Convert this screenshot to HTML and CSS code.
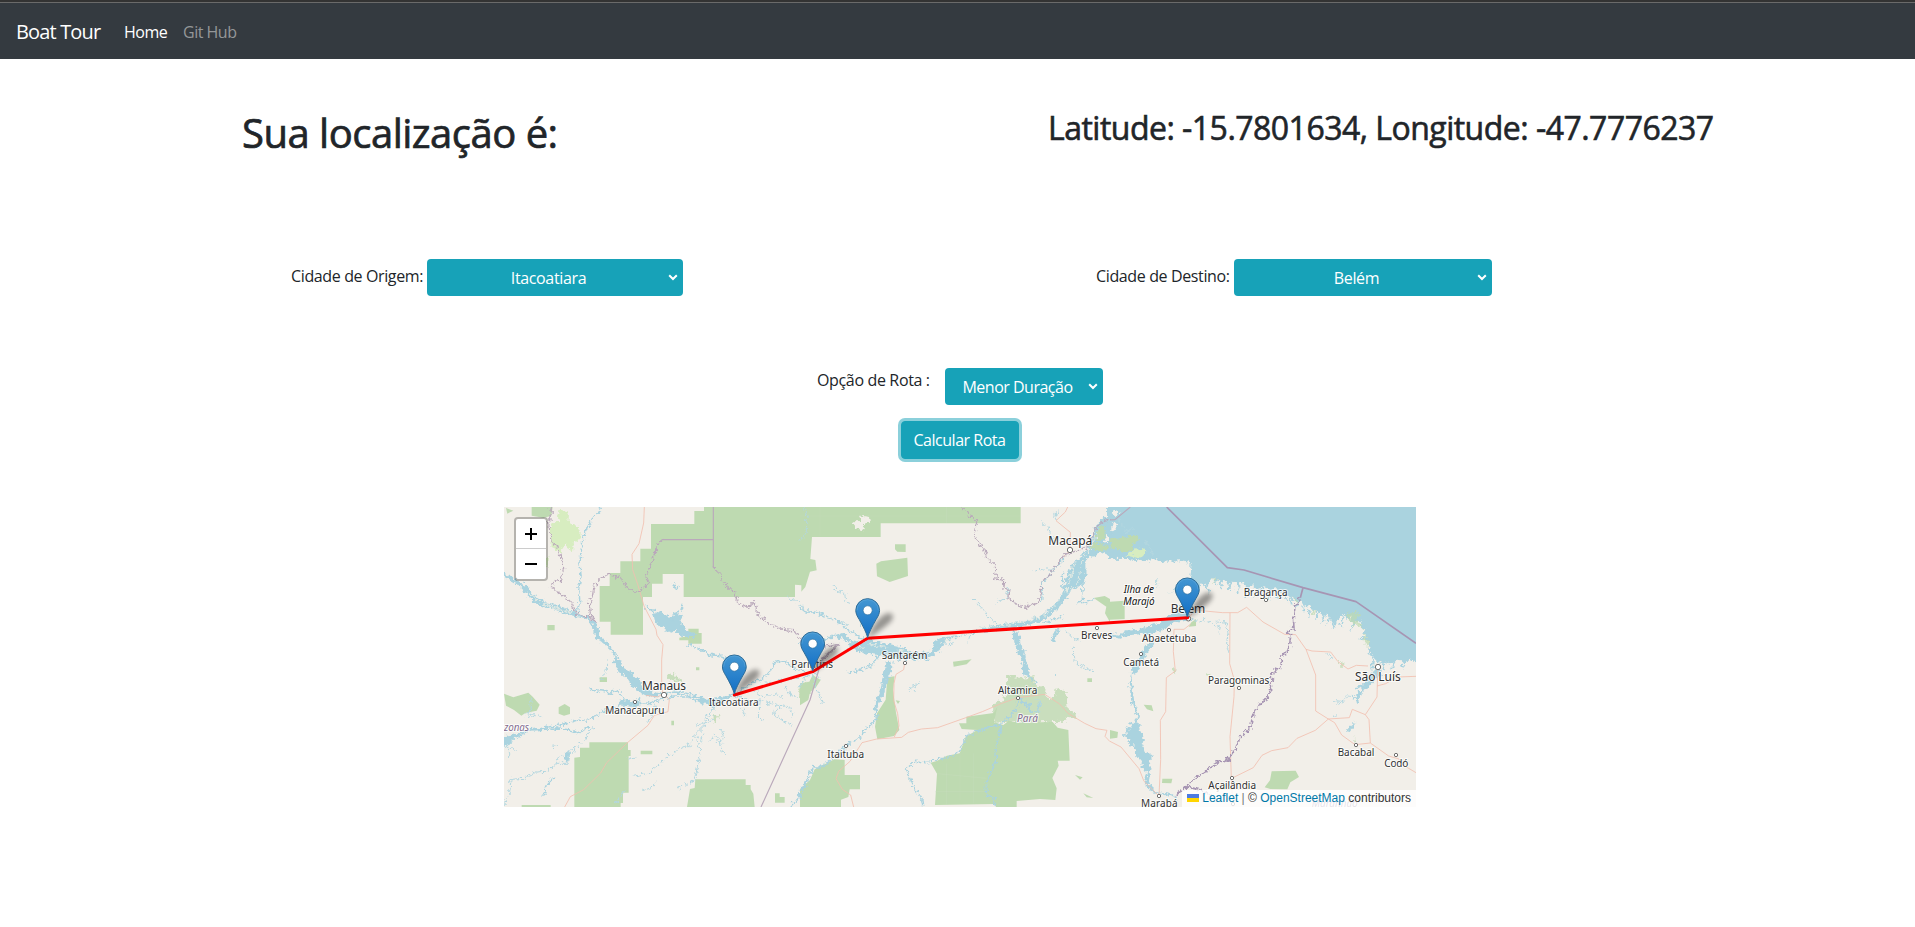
FILE: index.html
```html
<!DOCTYPE html>
<html lang="pt-BR">
<head>
<meta charset="utf-8">
<title>Boat Tour</title>
<link rel="stylesheet" href="styles.css">
</head>
<body>
<nav class="navbar">
  <a class="brand">Boat Tour</a>
  <a class="nav-link active">Home</a>
  <a class="nav-link">Git Hub</a>
</nav>
<main>
  <header class="location">
    <h1>Sua localização é:</h1>
    <h2>Latitude: -15.7801634, Longitude: -47.7776237</h2>
  </header>
  <section class="cities">
    <div class="field origin">
      <label>Cidade de Origem:</label>
      <div class="select"><span class="itaco">Itacoatiara</span><svg class="chevron" viewBox="0 0 10 7"><path d="M1.2 1.2 5 5 8.800 1.200"/></svg></div>
    </div>
    <div class="field destination">
      <label>Cidade de Destino:</label>
      <div class="select"><span class="belem">Belém</span><svg class="chevron" viewBox="0 0 10 7"><path d="M1.2 1.2 5 5 8.800 1.200"/></svg></div>
    </div>
  </section>
  <section class="route">
    <label>Opção de Rota :</label>
    <div class="select"><span class="menor">Menor Duração</span><svg class="chevron" viewBox="0 0 10 7"><path d="M1.2 1.2 5 5 8.800 1.200"/></svg></div>
  </section>
  <button class="calc"><span>Calcular Rota</span></button>
  <div class="map">
    <svg class="tiles" viewBox="12 21 2736 900" width="912" height="300">
      <defs>
        <linearGradient id="pin" x1="0" y1="0" x2="0" y2="1"><stop offset="0" stop-color="#4497d2"/><stop offset="1" stop-color="#126fc6"/></linearGradient>
        <filter id="soft" x="-50%" y="-50%" width="200%" height="200%"><feGaussianBlur stdDeviation="2.600"/></filter>
        <filter id="rough" filterUnits="userSpaceOnUse" x="-60" y="-60" width="2900" height="1100"><feTurbulence type="fractalNoise" baseFrequency=".09" numOctaves="3" seed="4"/><feDisplacementMap in="SourceGraphic" scale="22" xChannelSelector="R" yChannelSelector="G"/></filter>
        <g id="marker">
          <path d="M0 0C3-10 12-23 20-25 27-26 27-19 20-14 14-9 6-3 0 0z" fill="#000" opacity=".38" filter="url(#soft)"/>
          <path d="M0-.8C-1-5-4.500-12-8.500-19-10.500-22-11.900-25-11.900-27.800A11.900 11.900 0 0 1 11.900-27.800C11.900-25 10.500-22 8.500-19 4.500-12 1-5 0-.8z" fill="url(#pin)" stroke="#2e6c97" stroke-width="1"/>
          <path d="M-10.700-28A10.700 10.700 0 0 1 10.700-28" fill="none" stroke="#6db3e2" stroke-width=".7" opacity=".6"/>
          <circle cy="-28" r="4.500" fill="#fff" stroke="#2e6c97" stroke-width=".6"/>
        </g>
      </defs>
      <rect x="12" y="21" width="2736" height="900" fill="#f2efe9"/>

      <!-- western tiles -->
      <g class="wood">
        <path d="M640 21H612V33H583V72H453V146H421V184H361V219H329V258H299V365H332V404H429V291H456V251H488V222H551V291H885V254L904 256V275L916 261 930 215 950 211 946 180 931 177 936 111H1142V70H1562V21z"/>
        <path d="M95 21H158L154 48 130 53 95 47zM223 773 240 771V743H268V727H384V750H392V768H386V878H369V909H362V921H223zM570 867 584 864 586 838H737V855H752V868L760 881 764 921H561zM142 375H164V391H142zM299 532H321V546H299zM176 622 194 612 210 622V642L192 647 176 641zM422 752H457V763H422zM825 880H839V891H854V908H825zM65 915H152V921H65zM538 413 565 408V386H596V399H605V431H565V421H538zM514 662H522V676H514zM588 502H598V511H588zM18 24 40 32 22 41z"/>
        <path d="M12 581 40 592 60 586 85 578 98 590 119 614 110 632 76 639 64 647 42 630 18 617z"/>
        <path d="M504 525 520 519 550 545 530 545 505 541zM895 572 904 552 923 545 935 563 925 588 907 604 894 583zM637 650 650 641 656 651 643 668z" opacity=".8" filter="url(#rough)"/>
      </g>
      <path class="grass" filter="url(#rough)" d="M172 43 182 27 197 34 207 45 205 66 225 71 242 92 241 119 222 126 219 154 206 145 198 130 179 160 165 153 151 127 147 92 158 66 178 67zM147 170 142 205 130 180z"/>

      <g transform="translate(900 0)">
        <g class="wood">
          <path d="M285 133H317V156L292 155 285 148zM229 191 243 184 322 173 324 228 269 246 231 229zM459 485 515 478 500 493 461 500zM262 532 284 529 279 570 288 638 298 690 282 708 232 718 225 680 231 640 257 599zM287 601 300 603 294 612zM0 867 30 840 44 808 103 778 134 780V825H180V868H149L145 891 123 899V921H0z"/>
          <path d="M477 670H499V650L581 639 592 620 582 667 610 675 626 662 655 668 758 666 773 683 805 690 809 782H773L776 797 757 834 770 865 766 900 720 897 650 903V921H588L584 912 405 915 411 821 392 788 410 783 441 767 479 760 497 710 532 690 485 687z"/>
          <path filter="url(#rough)" d="M621 528 663 534 704 528 700 553 740 565 735 590 760 600 767 565 800 575 803 625 825 640 832 653 795 650 800 665 720 667 633 665 581 669 579 614 594 605 613 603 607 591 630 579 621 558z" opacity=".78"/>
          <path d="M862 535H876V546H862zM881 294 914 288 930 297V367L915 340 919 320zM0 550 28 545 38 525 62 540 49 560 30 577 25 600 0 616zM825 825 848 832 840 839zM850 880 880 894 860 892z"/>
        </g>
        <path filter="url(#rough)" d="M158 64 181 63 184 47 207 51 210 73 192 70 191 91 165 84z" fill="#f2efe9"/>
        <path class="grid" d="M411 821 560 835M440 915V790M480 900V760M405 875H560M520 910V760M0 48H660M440 21V69M60 21V108"/>
      </g>

      <g transform="translate(1830 0)">
        <!-- Atlantic and the northern coast -->
        <g filter="url(#rough)">
        <path class="sea" d="M-6 -30H970V500L895 476 884 491 870 479 850 493 835 488 823 493 815 485 806 491 797 477 783 462 775 465 779 447 773 417 760 402 766 386 747 377 756 362 733 367 716 366 729 350 705 357 709 340 696 349 681 361 670 373 659 352 641 345 625 333 609 333 601 319 585 319 573 306 556 302 541 291 526 286 507 275 499 264 479 278 467 263 443 271 427 255 410 268 398 245 386 259 371 242 359 254 344 238 332 248 315 235 303 244 286 257 276 250 264 276 240 293 240 238 245 190 214 184 160 185 138 178 101 184 53 177 -6 176z"/>
        <path class="land" d="M0 67 17 71 20 82 9 95 0 97zM13 25 26 38 18 50 5 43z"/>
        <path class="inlets" d="M286 257 298 277M315 235 322 258M332 248 335 270M359 254 356 270M386 259 382 280M410 268 405 291M443 271 433 289M479 278 476 298M499 270 505 296M526 286 533 306M541 291 545 313M565 305 559 322M580 319 580 340M601 329 596 350M622 335 618 357M643 346 636 371M659 352 651 377M679 361 670 386M700 349 692 381M733 367 722 391M774 417 748 412M790 470 786 511M818 490 822 511M850 493 846 505M884 491 876 501"/>
        </g>
        <g filter="url(#rough)">
        <path class="wood" d="M0 119 46 112 80 105 93 117 70 130 68 150 39 158 26 148 0 147z"/>
        <path class="grass" d="M49 166 77 145 106 149 110 162 84 174z"/>
        <path class="water" d="M235 298 208 321 181 344 150 367 120 378 91 389 53 392 25 404 0 400 0 407 28 416 55 406 94 402 119 405 155 391 190 370 220 360 240 357zM94 455 122 425 131 428 121 446 108 464 90 499 72 526 62 515 80 490zM806 493 819 520 802 532 777 561 755 572 740 607 734 598 742 580 763 555 775 530 791 518z"/>
        <path class="water" d="M63 516 58 558 65 608 79 646 73 672 60 665 65 687 46 681 51 701 37 706 57 715 52 730 73 737 76 771 96 782 94 803 112 815 104 850 128 880 190 889 205 904 205 893 186 882 133 876 117 845 122 798 115 787 132 767 105 757 97 732 107 723 97 717 96 695 88 690 93 675 79 670 87 646 72 602 67 558z"/>
        </g>
        <path class="wood" d="M244 367 258 357V378L236 380zM0 305 44 302V357L0 359zM0 690 24 696 22 713 0 716zM101 614 125 616 130 634 111 628zM157 836H187L184 850 156 849zM485 814 557 812 567 831 541 847 532 868 481 867 464 862 480 841z"/>
        <g filter="url(#rough)">
        <g class="wood" opacity=".7"><path d="M709 340 744 334 751 344 735 357 749 369 761 387 747 377 729 378zM759 403 778 419 775 441 762 429zM310 235 320 237 313 250zM546 292 563 299 560 306zM606 329 619 338 610 346zM690 486 707 490 691 508zM735 707 741 725 732 729zM288 516 302 522 294 532zM183 511 202 505 196 520z"/></g>
        <path class="stream" d="M240 357 264 365 286 358 309 371 331 382 326 400M320 366 349 369 354 399 349 439 358 459M672 602 699 604 710 588 735 590M682 613 705 606M709 693 724 676M720 685 734 668M668 652 678 644M650 461 668 473M660 480 658 465M140 235V260M203 256 180 280M25 54 45 98 71 85M105 118 130 165"/>
        <path d="M738 562 764 555 775 535 785 530 775 558 755 571 739 608M730 675 714 693" fill="none" stroke="#aad3df" stroke-width="7"/>
        </g>
      </g>

      <!-- rivers of the western half -->
      <g filter="url(#rough)">
      <path class="water" d="M-8 210 49 239 78 258 103 285 139 307 176 316 208 330 235 343 266 350 286 363 296 385 298 407 325 426 348 464 368 500 395 516 420 542 431 566 458 575 488 581 472 593 430 583 401 563 382 535 356 516 341 490 346 470 330 447 304 425 285 411 282 386 266 360 230 350 193 340 168 330 138 323 102 308 82 284 55 254 -8 219z"/>
      <path class="islands" d="M90 280 125 308 170 322 220 340M100 292 135 314 180 330"/>
      <path class="water" d="M355 602 380 598 409 604 420 596 425 614 409 622 379 618 363 612zM459 341 487 336 504 350 526 340 549 347 541 362 550 375 563 393 589 400 583 411 548 411 524 392 506 399 491 382 467 375zM2 711 49 702 76 704 40 715 28 735 2 738zM590 587 620 596 665 594 703 580 673 599 645 624 620 611 600 607zM190 768 205 754 210 773 201 790z"/>
      <path class="river" d="M302 21 297 34 269 66 254 98 245 140 240 187 243 230 236 267 239 300 232 333M2 722 49 705 93 690 132 683 176 676 206 668 230 661 268 660 302 638 337 629 370 609M93 690 137 688 178 687 208 689 238 699 252 687 278 681M265 571 306 573 331 580 340 570 364 579 373 598M361 610 409 607 445 610 479 599 520 588 560 588 603 608 634 608 673 593 703 581M488 581 525 576 559 580 605 596M432 315 456 332 489 345 530 371 564 401M520 250 529 268 538 258M547 311 540 334 530 340M700 585 724 570 741 555 778 542 808 517 825 487 848 483 870 494 889 510 915 512M565 433 603 449 627 463 673 470 703 481"/>
      <path class="stream" d="M645 650 615 674 583 705 573 730 529 753 503 768 481 792 448 819 400 829M585 705 602 750 592 801 582 842 532 868M613 700 602 721 609 737M640 700 661 723 667 756 680 763M665 690 670 717 652 727M627 727 638 710M649 625 621 647 617 669 589 676M701 583 742 601 779 600 828 615 869 621M742 601 728 630 734 649M781 600 775 650 790 661M828 615 824 645 850 663 877 676M757 567 787 591 810 582 849 589M853 555 867 583 890 593M869 621 880 651M790 545 826 549 862 535 895 535M278 681 252 723 209 754 206 790 169 790 142 814 106 816 73 835 33 838 29 880 12 918M189 768 169 780M49 703 26 738 26 771M12 735 45 751M80 652 91 643 124 650M92 590 94 628 79 646M385 777 411 769M374 864 360 890 347 915M427 872 449 865 473 842M230 740 218 760M151 740 177 735M340 478 349 488M299 540 318 520 321 480M442 629 454 645 445 668M465 612 480 643M860 290 894 309 910 328 920 348M912 21 921 49 918 103 899 122"/>
      <path d="M165 829 140 854 132 887M930 833 908 863 900 890 873 921" fill="none" stroke="#aad3df" stroke-width="5"/>
      </g>

      <g transform="translate(900 0)" filter="url(#rough)">
        <path class="water" d="M102 405 130 399 151 419 186 427 202 417 231 427 263 431 293 437 332 453 368 458 392 455 405 424 442 410 506 401 550 384 582 376 656 366 720 350 755 319 784 290 800 233 813 196 838 174 864 142 879 103 893 65 908 53 934 55V96L910 122 934 135V171L902 156 886 169 866 171 856 192 857 240 841 258 807 277 793 302 777 321 750 346 719 369 650 382 569 394 523 398 475 409 443 421 417 448 400 470 373 482 333 478 294 479 247 466 207 462 175 455 140 440 155 425 127 420z"/>
        <path class="water" d="M278 482 276 507 261 545 253 577 234 617 229 651 223 641 225 610 239 575 249 533 255 494 264 482zM641 392 655 395 663 432 674 469 687 505 684 527 669 523 668 492 652 454 643 427z"/>
        <path class="islands" d="M202 430 240 440 270 443M293 453 332 462M170 442 191 445M530 389 570 383 632 374M640 372 700 358 729 348 754 330 782 296M797 280 807 240 820 196 835 182M812 272 833 250 839 205 850 180M798 270 812 235 824 200M850 175 875 140 890 100M420 430 470 413M300 463 350 470"/>
        <path class="river" d="M0 322 18 337 40 335 65 343 92 356 124 369 145 390 166 404 207 430M104 405 70 423 0 430M240 465 214 496 177 510 146 520M235 645 218 669 193 692 179 712 138 737 92 780 62 802 41 800 23 831 13 861 0 872M653 600 649 630 618 660 597 676 542 688 498 710 473 760 438 773 384 785 343 784 319 808 329 832 342 863 366 899 368 921M604 674 588 740 589 784 574 815 559 846 559 886 583 895 587 921M662 599 679 618 692 640 713 638 719 610M684 525 711 549 698 553M765 390 775 390M700 362 730 370 790 348M824 213 850 240 847 304M791 218 785 268M881 160 930 145M884 298 860 305 833 310M725 300 727 250 765 205 795 172"/>
        <path class="stream" d="M0 535 20 530 39 510 58 535M24 520 0 560M33 521 48 560 68 611M19 335 4 312M99 255 109 273 134 280 137 302 150 307M145 388 136 368 124 370M184 363 181 384M325 570 360 545M350 579 340 552M420 457 409 442M440 437 431 420M464 427 447 436M503 427 510 406M521 296 550 326 560 345 597 377M587 310 620 292 625 261M703 213 733 207 766 207M725 67 745 87 761 120 771 124M775 26 763 50 770 62M800 395 818 415 838 421M820 440 821 478 845 499 879 515M763 520 773 530M671 450 679 475M705 596 722 603 716 636"/>
        <path d="M780 388 767 402 760 430M766 402 754 420M696 637 686 612 661 601" fill="none" stroke="#aad3df" stroke-width="7"/>
        <path class="wood" d="M902 74 914 83 914 115 890 127 886 115zM863 135 897 131 928 136V150L895 153 873 144z"/>
      </g>

      <!-- roads -->
      <path class="road" d="M433 21 431 69 417 131 396 163 398 209 414 256 432 318 468 388 471 406 489 434 485 479V551L488 581 474 591 438 586M488 581 508 598 504 635 463 646 444 676 380 730 320 788 302 819 251 869 211 890 194 921"/>
      <g transform="translate(900 0)"><path class="road" d="M803 21 796 36 768 62 811 97 810 151 792 168M314 489 311 509 288 523 282 550 281 602 293 641 297 678 283 711M654 593 605 610 547 635 492 655 413 683 364 687 325 697 305 712 230 717 186 728 150 784 116 814 108 836 127 868 152 885 161 921M654 593 734 583 779 612 804 640 854 670 888 686 921 691 915 709 930 725"/></g>
      <g transform="translate(1830 0)"><path class="road" d="M238 353 253 330 338 338 383 338 410 322 459 366 524 403 557 404 588 448 606 453 662 456 684 485 714 507 739 496 774 498M588 448 600 480 617 525V633L655 657 718 653 727 628 744 635 766 644 801 591 803 511M766 644 777 659 781 729 735 734 695 705 674 668 655 657 616 691 561 715 534 743 485 752 456 766 430 803 367 834M360 338 359 491 373 540 372 590 360 710 364 834 369 921M242 372 222 388 192 388 190 455 196 513 169 533 167 635 151 661 152 778 147 888 102 844 87 806 33 741 0 724M781 729 836 768 867 777 879 795 918 818M918 529 862 531 827 551 801 558"/></g>

      <!-- administrative borders -->
      <path class="border" filter="url(#rough)" d="M154 21 153 48 146 64 149 95 153 122 171 138 175 162 189 184 191 203 182 241 165 244 148 258 178 279 215 307 231 345 254 349 276 351 290 371 271 340 268 313 277 289 282 259 294 241 326 223 362 234 388 273 420 271 446 249 438 228 456 184 466 162 468 138 486 119M641 203 663 222 668 247 684 260 704 277 713 307 744 325 761 305 769 322 768 337 798 365 837 387 881 392 900 417 925 450 1015 433 965 480"/>
      <path class="border" d="M486 119H641M640 21V203M1015 433 965 480 930 600 783 921"/>
      <g transform="translate(900 0)"><path class="border" filter="url(#rough)" d="M488 21 505 43 530 66 522 105 551 145 559 172 586 197 588 235 610 237 612 268 627 271 623 296 650 312 674 322 714 308 724 273 725 244 745 229 770 197 789 168 830 152 870 136 882 99 900 67 930 60"/></g>
      <g transform="translate(1830 0)"><path class="border" d="M0 60 15 59 61 21"/><path class="border thick" d="M170 21 352 203 402 210 579 263 738 305 918 430M579 263 571 293"/><path class="border thick" filter="url(#rough)" d="M571 293 555 319 550 352 552 388 537 391 529 401 542 403 538 445 529 460 513 465 514 500 486 518 482 531 490 541 481 551 482 576 462 605 444 617 426 653 423 681 388 714 384 734 355 777 345 785 326 783 255 837 221 866 197 887M221 866 239 863 281 872 322 903"/></g>

      <!-- town dots and names -->
      <g class="dots">
        <circle cx="492" cy="585" r="8"/><circle cx="405" cy="606" r="5"/>
        <circle cx="1215" cy="489" r="5"/><circle cx="1038" cy="738" r="5"/><circle cx="1554" cy="594" r="5"/><circle cx="1710" cy="150" r="8"/><circle cx="1791" cy="384" r="5"/>
        <circle cx="2065" cy="356" r="7"/><circle cx="2007" cy="390" r="5"/><circle cx="1923" cy="462" r="5"/><circle cx="2298" cy="300" r="5"/><circle cx="2217" cy="564" r="5"/><circle cx="2634" cy="501" r="8"/><circle cx="2568" cy="735" r="5"/><circle cx="2688" cy="765" r="5"/><circle cx="2196" cy="834" r="5"/><circle cx="1977" cy="888" r="5"/><circle cx="2199" cy="912" r="5"/>
      </g>
      <g class="names">
        <text class="big" x="426" y="569" textLength="132">Manaus</text>
        <text x="316" y="642" textLength="177">Manacapuru</text>
        <text x="626" y="619" textLength="150">Itacoatiara</text>
        <text x="874" y="504" textLength="125">Parintins</text>
        <text x="1145" y="476" textLength="137">Santarém</text>
        <text x="982" y="773" textLength="110">Itaituba</text>
        <text x="1494" y="581" textLength="118">Altamira</text>
        <text class="big" x="1645" y="136" textLength="132">Macapá</text>
        <text x="1743" y="418" textLength="94">Breves</text>
        <text class="big" x="2012" y="339" textLength="104">Belém</text>
        <text x="1926" y="426" textLength="163">Abaetetuba</text>
        <text x="1870" y="497" textLength="107">Cametá</text>
        <text x="2231" y="288" textLength="132">Bragança</text>
        <text x="2124" y="553" textLength="184">Paragominas</text>
        <text class="big" x="2565" y="544" textLength="137">São Luís</text>
        <text x="2513" y="769" textLength="110">Bacabal</text>
        <text x="2653" y="800" textLength="72">Codó</text>
        <text x="2125" y="867" textLength="143">Açailândia</text>
        <text x="1923" y="921" textLength="110">Marabá</text>
        <text class="island" x="1871" y="279" textLength="91">Ilha de</text>
        <text class="island" x="1870" y="315" textLength="94">Marajó</text>
        <text class="state" x="1551" y="665" textLength="63">Pará</text>
        <text class="state" x="12" y="692" textLength="75">zonas</text>
        <text class="state" x="2435" y="921" textLength="138">Maranhão</text>
      </g>

      <path d="M703 585 938 515 1103 415 2063 353" fill="none" stroke="#f00" stroke-width="9" stroke-linecap="round" stroke-linejoin="round"/>
      <use href="#marker" transform="translate(1103 415) scale(3)"/>
      <use href="#marker" transform="translate(2062 353) scale(3)"/>
      <use href="#marker" transform="translate(938 515) scale(3)"/>
      <use href="#marker" transform="translate(703 584) scale(3)"/>
    </svg>
    <div class="zoom"><a><svg viewBox="0 0 12 12"><path d="M0 6H12M6 0V12"/></svg></a><a><svg viewBox="0 0 12 12"><path d="M0 6H12"/></svg></a></div>
    <div class="attribution"><svg class="flag" viewBox="0 0 12 8"><path fill="#4c7be1" d="M0 0h12v4H0z"/><path fill="#ffd500" d="M0 4h12v4H0z"/></svg> <a>Leaflet</a> <span>|</span> © <a>OpenStreetMap</a> contributors</div>
  </div>
</main>
</body>
</html>
```
FILE: styles.css
```css
* { box-sizing: border-box; }
body {
  margin: 0;
  background: #fff;
  color: #212529;
  font: 400 16px/24px "Open Sans", "Noto Sans", sans-serif;
}
.navbar {
  display: flex;
  align-items: center;
  height: 59px;
  padding: 3px 16px 0;
  border-top: 2px solid #333;
  background: #343a40;
  box-shadow: inset 0 1px #6a6a6a;
  color: #fff;
}
.brand { width: 84px; margin-right: 24px; font-size: 20px; letter-spacing: -.85px; white-space: nowrap; }
.nav-link { width: 43px; margin-right: 16px; color: #949799; letter-spacing: -.5px; white-space: nowrap; }
.nav-link:last-child { width: 60px; }
.active { color: #fff; }
.location {
  display: grid;
  grid-template-columns: 806px 1fr;
  height: 200px;
  padding: 50px 0 0 242px;
}
h1, h2 { margin: 0; font-weight: 500; white-space: nowrap; }
h1 { font-size: 40px; line-height: 48px; letter-spacing: -.5px; -webkit-text-stroke: .7px #212529; }
h2 { font-size: 32px; line-height: 38px; letter-spacing: -.52px; -webkit-text-stroke: .6px #212529; }
.cities { display: grid; grid-template-columns: 805px 1fr; padding-left: 291px; height: 109px; }
.field { display: flex; }
.field label { width: 136px; padding-top: 5px; letter-spacing: -.37px; white-space: nowrap; }
.destination label { width: 138px; }
.select {
  position: relative;
  display: flex;
  justify-content: center;
  width: 256px;
  height: 37px;
  padding: 7px 13px 0 0;
  border-radius: 4px;
  background: #17a2b8;
  color: #fff;
  letter-spacing: -.35px;
}
.destination .select { width: 258px; }
.chevron { position: absolute; right: 5px; top: 15px; width: 10px; height: 7px; }
.chevron path { fill: none; stroke: #fff; stroke-width: 2; }
.route { display: flex; justify-content: center; height: 53px; padding-left: 5px; }
.route label { width: 128px; letter-spacing: -.35px; }
.route .select { width: 158px; letter-spacing: -.5px; }
.calc {
  display: block;
  width: 118px;
  height: 38px;
  margin: 0 auto;
  padding: 0;
  position: relative;
  left: 2px;
  border: 1px solid #17a2b8;
  border-radius: 4px;
  background: #17a2b8;
  box-shadow: 0 0 0 3px rgba(23, 162, 184, .5);
  color: #fff;
  font: inherit;
  letter-spacing: -.48px;
}
.map { position: relative; width: 912px; height: 300px; margin: 48px 0 0 504px; overflow: hidden; }
.tiles { display: block; }
.wood { fill: #bedab1; }
.grass { fill: #d7edc0; }
.sea, .water { fill: #aad3df; }
.land { fill: #f2efe9; }
.river, .stream, .inlets, .road, .border, .grid, .islands { fill: none; stroke-linejoin: round; }
.river { stroke: #aad3df; stroke-width: 4.5; }
.stream { stroke: #b3d7e0; stroke-width: 3; }
.inlets { stroke: #aad3df; stroke-width: 5; }
.islands { stroke: #e6ece4; stroke-width: 3; }
.grid { stroke: #c9dfbf; stroke-width: 1; }
.road { stroke: #f2bfb0; stroke-width: 2.5; }
.border { stroke: #baa9bb; stroke-width: 3.5; }
.thick { stroke: #a795b3; stroke-width: 5; }
.dots { fill: #fff; stroke: #555; stroke-width: 2.5; }
.names { font-family: "Noto Sans", sans-serif; font-size: 30px; fill: #303030; paint-order: stroke; stroke: #fff; stroke-opacity: .75; stroke-width: 6; stroke-linejoin: round; }
.names .big { font-size: 36px; }
.names .island { font-style: italic; fill: #111; }
.names .state { font-style: italic; fill: #836b8f; }
.zoom { position: absolute; left: 10px; top: 10px; width: 34px; border: 2px solid rgba(0,0,0,.25); border-radius: 4px; background: #fff; background-clip: padding-box; }
.zoom a { display: flex; align-items: center; justify-content: center; height: 30px; }
.zoom a:first-child { height: 30px; border-bottom: 1px solid #ccc; }
.zoom svg { width: 12px; height: 12px; }
.zoom path { stroke: #000; stroke-width: 2; }
.attribution { position: absolute; right: 0; bottom: 0; padding: 0 5px; background: rgba(255,255,255,.8); color: #333; font: 12px/17px "Liberation Sans", Arial, sans-serif; white-space: nowrap; }
.attribution a { color: #0078a8; }
.attribution span { color: #777; }
.flag { width: 12px; height: 8px; }
```
